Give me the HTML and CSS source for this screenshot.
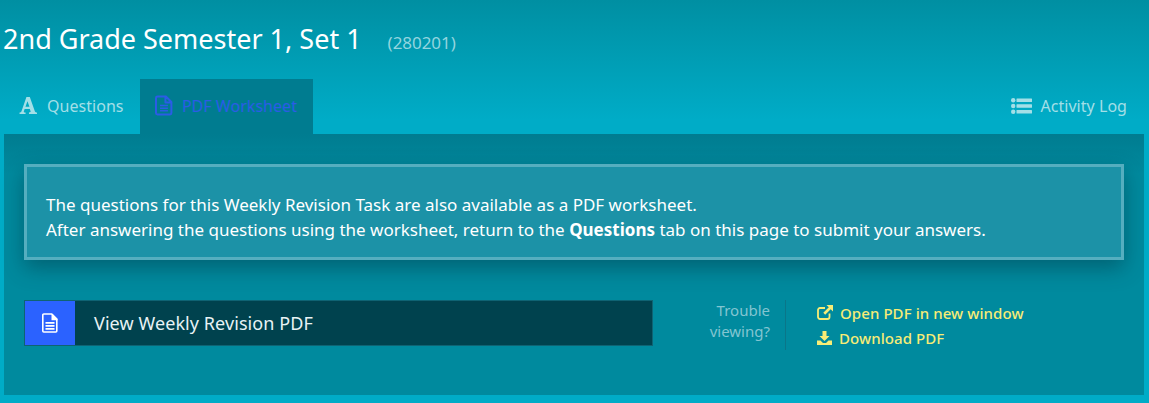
FILE: index.html
```html
<!DOCTYPE html>
<html lang="en">
<head>
<meta charset="utf-8">
<title>2nd Grade Semester 1, Set 1</title>
<link rel="stylesheet" href="styles.css">
</head>
<body>
<header class="title-row">
  <h1 class="title">2nd Grade Semester 1, Set 1</h1>
  <span class="code">(280201)</span>
</header>
<nav class="tabs">
  <a class="tab">
    <svg class="tab-icon-a" viewBox="0 0 20 18"><path fill="currentColor" d="M7.800 0h3.600l5.300 15c.3.800.8 1.200 2.300 1.400V18h-8.500v-1.600c1.500-.1 2-.5 1.700-1.300l-.8-2.500H5.900l-.8 2.400c-.3.900.2 1.300 1.800 1.400V18H.5v-1.600c1.200-.2 1.800-.6 2.100-1.400zM8.900 4.600 6.800 10.300h4.200z"/></svg>
    <span>Questions</span>
  </a>
  <a class="tab active">
    <svg class="tab-icon" viewBox="0 0 18 20"><path fill="none" stroke="currentColor" stroke-width="2" stroke-linejoin="round" d="M2.500 1h8.500l5.500 5.500v11a1.500 1.500 0 0 1-1.500 1.500H2.500A1.500 1.500 0 0 1 1 17.500v-15A1.500 1.500 0 0 1 2.500 1zM10.500 1.500V7H16.500"/><path stroke="currentColor" stroke-width="1.500" d="M5 10h8M5 12.700h8M5 15.400h8"/></svg>
    <span>PDF Worksheet</span>
  </a>
  <a class="tab right">
    <svg class="tab-icon-list" viewBox="0 0 21 16"><g fill="currentColor"><circle cx="2.200" cy="2.200" r="2.200"/><circle cx="2.200" cy="8" r="2.200"/><circle cx="2.200" cy="13.800" r="2.200"/><rect x="5.500" y=".5" width="15.500" height="3.400" rx=".5"/><rect x="5.500" y="6.300" width="15.500" height="3.400" rx=".5"/><rect x="5.500" y="12.100" width="15.500" height="3.400" rx=".5"/></g></svg>
    <span>Activity Log</span>
  </a>
</nav>
<main class="panel">
  <section class="notice">
    <p>The questions for this Weekly Revision Task are also available as a PDF worksheet.</p>
    <p>After answering the questions using the worksheet, return to the <strong>Questions</strong> tab on this page to submit your answers.</p>
  </section>
  <section class="pdf-row">
    <a class="view-btn">
      <span class="view-icon">
        <svg viewBox="0 0 16 20" width="16" height="20"><path fill="none" stroke="#fff" stroke-width="1.600" stroke-linejoin="round" d="M1.800 1h8l5 5v12a1 1 0 0 1-1 1h-12a1 1 0 0 1-1-1V2a1 1 0 0 1 1-1z"/><path fill="#fff" d="M9.500 1h1l5 5v1.200h-6zM3.500 9h9v1.700h-9zM3.500 12h9v1.700h-9zM3.500 15h9v1.700h-9z"/></svg>
      </span>
      <span class="view-label">View Weekly Revision PDF</span>
    </a>
    <div class="trouble">Trouble<br>viewing?</div>
    <div class="links">
      <a class="link">
        <svg class="link-icon" viewBox="0 0 16 15"><path fill="none" stroke="currentColor" stroke-width="1.800" d="M12.500 8.500v3.500a2 2 0 0 1-2 2H3a2 2 0 0 1-2-2V5a2 2 0 0 1 2-2h5"/><path fill="currentColor" d="M9.500 0H16v6.500l-2.300-2.300-5.500 5.500-1.900-1.900 5.500-5.500z"/></svg>
        <span>Open PDF in new window</span>
      </a>
      <a class="link">
        <svg class="link-icon dl" viewBox="0 0 15 14"><path fill="currentColor" d="M5.500 0h4v5h3L7.500 10 2.500 5h3zM0 9.500h3.500L6 12h3l2.500-2.500H15V14H0z"/></svg>
        <span>Download PDF</span>
      </a>
    </div>
  </section>
</main>
</body>
</html>
```

FILE: styles.css
```css
* {
  box-sizing: border-box;
}

html, body {
  margin: 0;
  height: 403px;
  overflow: hidden;
}

body {
  padding: 0 5px 8px 4px;
  font-family: "Noto Sans", "Open Sans", sans-serif;
  color: #fff;
  background: linear-gradient(180deg, #008fa2 0, #00acc7 120px, #00acc7 100%);
}

.title-row {
  display: flex;
  align-items: baseline;
  height: 79px;
  padding-top: 21px;
}

.title {
  margin: 0 0 0 -1px;
  font-size: 27px;
  line-height: 36px;
  font-weight: 400;
}

.code {
  margin-left: 26px;
  font-size: 17px;
  letter-spacing: -0.05px;
  color: #93d5df;
}

.tabs {
  display: flex;
  height: 55px;
}

.tab {
  display: flex;
  align-items: center;
  padding: 0 16px 2px 15px;
  font-size: 16px;
  letter-spacing: 0.04px;
  white-space: nowrap;
  color: #a3dfe7;
}

.tab:first-child {
  width: 136px;
}

.tab.active {
  width: 173px;
  color: #2b5ce6;
  background: #007c90;
}

.tab.right {
  margin-left: auto;
  padding-right: 17px;
}

.tab-icon-a {
  width: 19px;
  height: 17px;
  margin-right: 9px;
}

.tab-icon {
  width: 18px;
  height: 21px;
  margin-right: 9px;
}

.tab-icon-list {
  width: 21px;
  height: 16px;
  margin-right: 8px;
}

.panel {
  height: 261px;
  padding: 30px 20px;
  background: linear-gradient(180deg, #007c90 0, #008a9e 40px, #008a9e 100%);
}

.notice {
  height: 96px;
  padding: 25px 19px 0;
  font-size: 17px;
  line-height: 25px;
  background: #1c92a7;
  border: 3px solid #55aebf;
  box-shadow: 0 8px 20px rgba(0, 50, 65, 0.45);
}

.notice p {
  margin: 0;
}

.notice strong {
  font-weight: 700;
}

.pdf-row {
  display: flex;
  align-items: flex-start;
  margin-top: 40px;
}

.view-btn {
  display: flex;
  align-items: stretch;
  width: 629px;
  height: 46px;
  background: #00424e;
  border: 1px solid #0f6373;
}

.view-icon {
  display: flex;
  align-items: center;
  justify-content: center;
  width: 50px;
  background: #2b62ff;
}

.view-label {
  display: flex;
  align-items: center;
  padding-left: 19px;
  font-size: 18px;
  letter-spacing: 0.08px;
  color: #e8f3f5;
}

.trouble {
  width: 117px;
  height: 50px;
  font-size: 15px;
  line-height: 21px;
  text-align: right;
  color: #83c5d1;
}

.links {
  display: flex;
  flex-direction: column;
  gap: 0;
  height: 50px;
  margin-left: 15px;
  padding-left: 31px;
  border-left: 1px solid #0a7689;
}

.link {
  display: flex;
  align-items: center;
  height: 25px;
  font-size: 15px;
  font-weight: 500;
  letter-spacing: 0.08px;
  color: #f7ec76;
}

.link-icon {
  width: 16px;
  height: 15px;
  margin-right: 7px;
}

.link-icon.dl {
  width: 15px;
  height: 14px;
}
```
